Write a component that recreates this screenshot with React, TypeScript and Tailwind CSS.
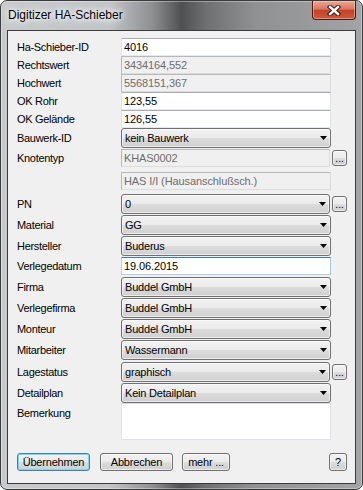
import type { ReactNode } from "react";

const font = "font-['Liberation_Sans',Arial,sans-serif]";

function Label({ children, top }: { children?: ReactNode; top?: boolean }) {
  return (
    <span
      className={`w-[104px] shrink-0 text-[11px] leading-[13px] tracking-[-0.3px] text-black ${top ? "pt-[4px]" : ""}`}
    >
      {children}
    </span>
  );
}

function TextBox({ value, disabled, focus }: { value: string; disabled?: boolean; focus?: boolean }) {
  let cls = "bg-white border-[#abadb3] border-r-[#e2e3ea] border-b-[#e3e9ef] border-l-[#e2e3ea] text-black";
  if (disabled) cls = "bg-[#f0f0f0] border-[#b8b8b8] border-b-[#dcdcdc] border-r-[#dcdcdc] text-[#6d6d6d]";
  if (focus) cls = "bg-white border-[#3d7bad] border-r-[#a4c9e3] border-b-[#b5cfe7] border-l-[#b5cfe7] text-black";
  return (
    <div className={`w-[210px] h-[18px] border flex items-center pl-[2px] text-[11px] tracking-[-0.1px] ${cls}`}>
      {value}
    </div>
  );
}

function Combo({ value }: { value: string }) {
  return (
    <div className="w-[210px] h-[20px] border border-[#707070] rounded-[3px] bg-[linear-gradient(#f2f2f2,#ebebeb_50%,#dddddd_50%,#cfcfcf)] shadow-[inset_0_0_0_1px_rgba(255,255,255,0.6)] flex items-center pl-[3px] pr-[3px] text-[11px] tracking-[-0.2px] text-black">
      <span className="flex-1">{value}</span>
      <svg width="7" height="4" viewBox="0 0 7 4">
        <polygon points="0,0 7,0 3.5,4" fill="#000" />
      </svg>
    </div>
  );
}

function Dots() {
  return (
    <div className="ml-[2px] w-[15px] h-[16px] border border-[#707070] rounded-[3px] bg-[linear-gradient(#f2f2f2,#ebebeb_50%,#dddddd_50%,#cfcfcf)] shadow-[inset_0_0_0_1px_rgba(255,255,255,0.6)] flex items-end justify-center text-[10px] leading-[12px] text-black">
      ...
    </div>
  );
}

function Btn({ children, w, primary }: { children: ReactNode; w: string; primary?: boolean }) {
  return (
    <div
      className={`${w} h-[18px] border rounded-[3px] bg-[linear-gradient(#f2f2f2,#ebebeb_50%,#dddddd_50%,#cfcfcf)] flex items-center justify-center text-[11px] tracking-[-0.2px] text-black ${
        primary
          ? "border-[#3c7fb1] shadow-[inset_0_0_0_1px_#7fd6f8]"
          : "border-[#707070] shadow-[inset_0_0_0_1px_rgba(255,255,255,0.6)]"
      }`}
    >
      {children}
    </div>
  );
}

export default function App() {
  return (
    <div className={`${font} w-[363px] h-[490px] relative overflow-hidden rounded-[7px] border border-[#3a3a3a] bg-[linear-gradient(90deg,#c6cacd_0%,#c1c5c8_30%,#8d8f91_42%,#4f5051_50%,#6f7071_57%,#8f9091_70%,#a3a4a5_100%)] shadow-[inset_0_0_0_1px_rgba(255,255,255,0.35)]`}>
      {/* title bar */}
      <div className="h-[29px] flex items-center pl-[7px] pb-[1px] text-[12px] text-black [text-shadow:0_0_8px_#fff,0_0_12px_#fff,0_0_4px_#fff]">
        Digitizer HA-Schieber
      </div>

      <div className="absolute top-0 right-[6px] w-[44px] h-[19px] rounded-b-[4px] border border-t-0 border-[#4a1c12] bg-[linear-gradient(#e9a898,#d9765f_45%,#c5432a_52%,#d0563a)] shadow-[inset_0_0_0_1px_rgba(255,220,200,0.45)] flex items-center justify-center">
        <svg width="14" height="11" viewBox="0 0 14 11">
          <path d="M3 2 L11 9 M11 2 L3 9" stroke="#3b1c14" strokeWidth="4.4" strokeLinecap="square" />
          <path d="M3 2 L11 9 M11 2 L3 9" stroke="#ffffff" strokeWidth="2.4" strokeLinecap="square" />
        </svg>
      </div>

      {/* client area */}
      <div className="mx-[6px] h-[454px] border border-[#3c3c3c] bg-[#f0f0f0] flex flex-col pt-[7px] pl-[9px] pr-[8px]">
        <div className="flex items-center">
          <Label>Ha-Schieber-ID</Label>
          <TextBox value="4016" />
        </div>
        <div className="flex items-center">
          <Label>Rechtswert</Label>
          <TextBox value="3434164,552" disabled />
        </div>
        <div className="flex items-center">
          <Label>Hochwert</Label>
          <TextBox value="5568151,367" disabled />
        </div>
        <div className="flex items-center">
          <Label>OK Rohr</Label>
          <TextBox value="123,55" />
        </div>
        <div className="flex items-center">
          <Label>OK Gelände</Label>
          <TextBox value="126,55" />
        </div>
        <div className="flex items-center">
          <Label>Bauwerk-ID</Label>
          <Combo value="kein Bauwerk" />
        </div>
        <div className="flex items-center mt-[1px]">
          <Label>Knotentyp</Label>
          <TextBox value="KHAS0002" disabled />
          <Dots />
        </div>
        <div className="flex items-center mt-[5px]">
          <Label />
          <TextBox value="HAS I/I (Hausanschlußsch.)" disabled />
        </div>
        <div className="flex items-center mt-[4px]">
          <Label>PN</Label>
          <Combo value="0" />
          <Dots />
        </div>
        <div className="flex items-center mt-[1px]">
          <Label>Material</Label>
          <Combo value="GG" />
        </div>
        <div className="flex items-center mt-[1px]">
          <Label>Hersteller</Label>
          <Combo value="Buderus" />
        </div>
        <div className="flex items-center mt-[1px]">
          <Label>Verlegedatum</Label>
          <TextBox value="19.06.2015" focus />
        </div>
        <div className="flex items-center mt-[2px]">
          <Label>Firma</Label>
          <Combo value="Buddel GmbH" />
        </div>
        <div className="flex items-center mt-[1px]">
          <Label>Verlegefirma</Label>
          <Combo value="Buddel GmbH" />
        </div>
        <div className="flex items-center mt-[1px]">
          <Label>Monteur</Label>
          <Combo value="Buddel GmbH" />
        </div>
        <div className="flex items-center mt-[1px]">
          <Label>Mitarbeiter</Label>
          <Combo value="Wassermann" />
        </div>
        <div className="flex items-center mt-[2px]">
          <Label>Lagestatus</Label>
          <Combo value="graphisch" />
          <Dots />
        </div>
        <div className="flex items-center mt-[1px]">
          <Label>Detailplan</Label>
          <Combo value="Kein Detailplan" />
        </div>
        <div className="flex items-start">
          <Label top>Bemerkung</Label>
          <div className="w-[210px] h-[37px] bg-white border border-[#e2e3ea] border-t-[#dcdde3]" />
        </div>

        <div className="flex items-center mt-[13px]">
          <Btn w="w-[73px]" primary>
            Übernehmen
          </Btn>
          <div className="ml-[10px]">
            <Btn w="w-[73px]">Abbrechen</Btn>
          </div>
          <div className="ml-[9px]">
            <Btn w="w-[48px]">mehr ...</Btn>
          </div>
          <div className="ml-auto">
            <Btn w="w-[18px]">?</Btn>
          </div>
        </div>
      </div>
    </div>
  );
}
